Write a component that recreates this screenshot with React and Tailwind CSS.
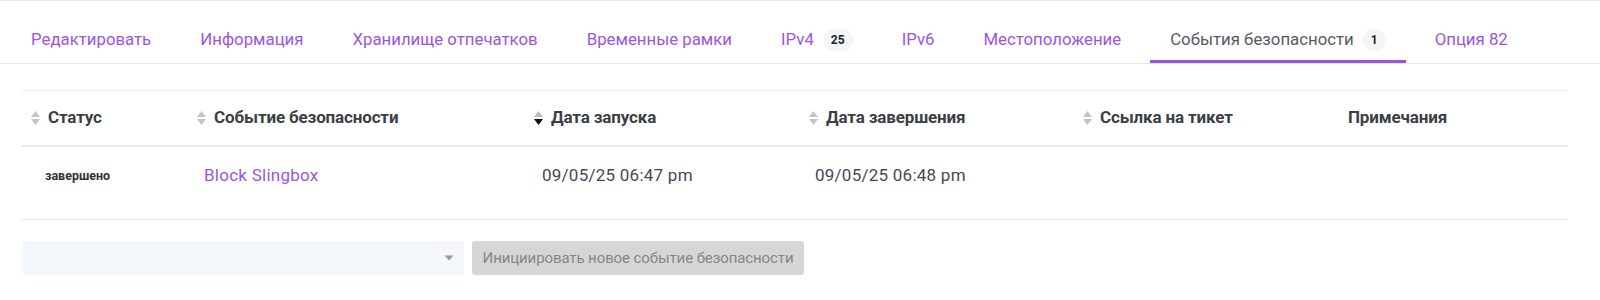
import React from "react";

const tabs = [
  { label: "Редактировать" },
  { label: "Информация" },
  { label: "Хранилище отпечатков" },
  { label: "Временные рамки" },
  { label: "IPv4", badge: "25" },
  { label: "IPv6" },
  { label: "Местоположение" },
  { label: "События безопасности", badge: "1", active: true },
  { label: "Опция 82" },
];

function SortIcon({ active }) {
  return (
    <svg width="11" height="16" viewBox="0 0 11 16" className="shrink-0">
      <path d="M5.5 1 L10 7 L1 7 Z" fill={active ? "#b9b9b9" : "#c4c4c4"} />
      <path d="M5.5 15 L10 9 L1 9 Z" fill={active ? "#111111" : "#c4c4c4"} />
    </svg>
  );
}

const cols = [
  { label: "Статус", w: "w-[166px]", sort: true },
  { label: "Событие безопасности", w: "w-[337px]", sort: true },
  { label: "Дата запуска", w: "w-[275px]", sort: true, active: true },
  { label: "Дата завершения", w: "w-[274px]", sort: true },
  { label: "Ссылка на тикет", w: "w-[266px]", sort: true },
  { label: "Примечания", w: "flex-1", sort: false },
];

export default function App() {
  return (
    <div className="w-[1600px] h-[300px] bg-white font-['Roboto',sans-serif] overflow-hidden">
      <div className="flex h-[64px] border-t border-b border-[#e4e4e4] pl-[11px] gap-[9px]">
        {tabs.map((t) => (
          <div
            key={t.label}
            className={
              "flex items-center px-5 pt-[18px] border-b-[3px] text-[16.8px] " +
              (t.active
                ? "border-[#9b4fe3] text-[#555b66]"
                : "border-transparent text-[#9d55e3]")
            }
          >
            <span>{t.label}</span>
            {t.badge && (
              <span className="ml-[9px] inline-flex items-center justify-center h-[22px] min-w-[22px] px-[8px] rounded-full bg-[#f3f5f8] text-[12px] font-bold text-[#222]">
                {t.badge}
              </span>
            )}
          </div>
        ))}
      </div>

      <div className="ml-[22px] w-[1546px] mt-[26px]">
        <div className="flex h-[57px] border-t border-[#ececec] border-b-2 border-b-[#e3e7ee]">
          {cols.map((c) => (
            <div key={c.label} className={c.w + " flex items-center gap-[7px] pl-[8px]"}>
              {c.sort && <SortIcon active={c.active} />}
              <span className="text-[17px] font-bold text-[#3b3f45] tracking-[-0.15px]">{c.label}</span>
            </div>
          ))}
        </div>
        <div className="flex h-[73px] border-b border-[#e8e8e8] text-[17px] tracking-[0.25px] text-[#454a52]">
          <div className="w-[166px] pl-[23px] pt-[15px]">
            <span className="text-[12.5px] font-bold text-[#333] tracking-normal">завершено</span>
          </div>
          <div className="w-[337px] pl-[16px] pt-[16px] text-[#9d55e3]">Block Slingbox</div>
          <div className="w-[275px] pl-[17px] pt-[16px]">09/05/25 06:47 pm</div>
          <div className="w-[274px] pl-[15px] pt-[16px]">09/05/25 06:48 pm</div>
          <div className="w-[266px]"></div>
          <div className="flex-1"></div>
        </div>

        <div className="flex gap-[8px] mt-[21px]">
          <div className="w-[442px] h-[34px] rounded-[3px] bg-[#f4f7fb] flex items-center justify-end pr-[10px]">
            <svg width="10" height="6" viewBox="0 0 10 6">
              <path d="M0.5 0.5 L9.5 0.5 L5 5.5 Z" fill="#9a9a9a" />
            </svg>
          </div>
          <div className="w-[332px] h-[34px] rounded-[3px] bg-[#d6d6d6] flex items-center justify-center text-[15px] text-[#868686] tracking-[-0.1px] whitespace-nowrap">
            Инициировать новое событие безопасности
          </div>
        </div>
      </div>
    </div>
  );
}
